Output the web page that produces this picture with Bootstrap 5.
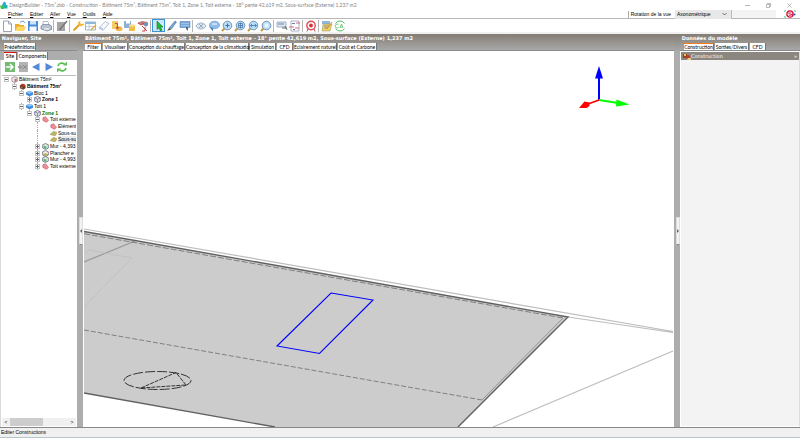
<!DOCTYPE html>
<html lang="fr">
<head>
<meta charset="utf-8">
<meta name="viewport" content="width=device-width, initial-scale=1">
<title>DesignBuilder - 75m².dsb - Construction</title>
<link href="https://cdn.jsdelivr.net/npm/bootstrap@5.3.0/dist/css/bootstrap.min.css" rel="stylesheet">
<style>
body{font:5px/7px "Liberation Sans",Arial,sans-serif;color:#000;background:#fff}
button,select,input,a{font:inherit;color:inherit;text-decoration:none}
button{border:0;background:none;padding:0}
svg{display:block;flex:none}
.ic{width:12px;height:12px}
.titlebar{height:10px;color:#858585;font-family:Lato,"Liberation Sans",sans-serif}
.menubar{height:9px;border-bottom:1px solid #b8b8b8}
.menubar a{font-size:5px}
.menubar a:first-child{margin-left:8px}
.menubar u{text-underline-offset:1px}
.menus{gap:7px}
.view-sel{width:56px;height:9px;background:#e8e8e8;border:0;padding:0 10px 0 2px;appearance:none;line-height:8px}
.rot{border-left:1px solid #aaa;padding-left:2px}
.spare{width:45px;height:8px;background:#f3f3f3;border-left:1px solid #bbb}
.toolbar{height:15px;border-bottom:2px solid #f1f1f1}
.toolbar button{width:13px;height:13px;display:flex;align-items:center;justify-content:center}
.toolbar .picked{background:#cce8ff;outline:1px solid #3c93d8;outline-offset:-1px}
.vr-s{width:1px;height:12px;background:#b5b5b5;margin:0 1px}
.head{height:17px;background:linear-gradient(#857d74,#a8a8a8);border-bottom:1px solid #8a8a8a}
.caption{font:bold 5px/8px "DejaVu Sans",Verdana,sans-serif;color:#fff;height:9px;white-space:nowrap;overflow:hidden}
.tabs{gap:1px;height:7px}
.tabs button{background:#fff;font-family:Lato,"Liberation Sans",sans-serif;line-height:6px;height:7px;padding:0;border-right:1px solid #777;white-space:nowrap;text-align:center}
.tabs .on{border-top:1px solid #f27a1a;line-height:5px}
.tabs .red{border-top-color:#e01010}
.side-l{width:77px}
.side-l .tabs,.side-r .tabs{padding-left:4px}
.side-r{width:120px}
.sub{background:#adadad;height:9px;padding-top:1px}
.sub .tabs{height:8px}
.sub .tabs button{height:8px;line-height:7px}
.splitter{width:6px;background:linear-gradient(#857d74,#a8a8a8) 0 0/100% 17px no-repeat,#adadad}
.splitter button{width:4px;height:28px;background:#f2f2f2;border:1px solid #ddd;border-bottom-color:#888;display:flex;align-items:center}
.treebox{border-left:1px solid #d9d9d9;background:#fff}
.tree-tools{height:16px;gap:1px;border-bottom:1px solid #bcbcbc;margin:0 1px;padding:1px 1px 0 2px}
.tree-tools button{width:12px;height:12px}
.tree{margin:0;padding:0;list-style:none;overflow:hidden;margin-right:1px}
.tree li{display:flex;align-items:center;height:7px;white-space:nowrap;position:relative}
.tree li:nth-child(3n){height:6px}
.tree li>svg{width:7px;height:7px;margin:0 1px 0 2px}
.tree input{appearance:none;width:5px;height:5px;margin:0;border:1px solid #c4c4c4;background:linear-gradient(#666,#666) center/3px 1px no-repeat,#fff;flex:none;z-index:1}
.tree input:not(:checked){background:linear-gradient(#666,#666) center/3px 1px no-repeat,linear-gradient(#666,#666) center/1px 3px no-repeat,#fff}
.tree i{width:5px;flex:none}
.l0{padding-left:3px}.l1{padding-left:11px}.l2{padding-left:18px}.l3{padding-left:26px}.l4{padding-left:34px}.l5{padding-left:42px}
.tree li::before{content:"";position:absolute;top:0;bottom:0;border-left:1px dotted #aaa}
.tree .l1::before{left:13px}.tree .l2::before{left:20px}.tree .l3::before{left:28px}.tree .l4::before,.tree .l5::before{left:36px}.tree .l0::before{display:none}
.green{color:#007800}
.pickrow span{background:#ececec;flex:1}
.hscroll{height:8px;background:#f0f0f0;margin:0 1px 1px}
.hscroll button{width:8px;text-align:center;line-height:7px}
.thumb{width:33px;background:#cdcdcd}
.view{border-left:1px solid #fff}
.view-tabs{padding-left:2px}
.props{background:#f3f3f3;border:1px solid #fff;border-right-color:#ddd}
.group{background:#8b867f;color:#fff;height:8px;line-height:8px;padding:0 2px;font-family:"DejaVu Sans",Verdana,sans-serif}
.status{height:11px;background:#f0f0f0;border-top:1px solid #888;border-bottom:1px solid #b7c3cd;padding:1px 1px 0}
.w17{width:17px}.w25{width:25px}.w56{width:56px}.w63{width:63px}.w26{width:26px}.w16{width:16px}.w43{width:43px}.w39{width:39px}.w30{width:30px}.w32{width:32px}.w34{width:34px}.w13{width:13px}
</style>
<script src="https://cdn.jsdelivr.net/npm/bootstrap@5.3.0/dist/js/bootstrap.bundle.min.js"></script>
</head>
<body class="vh-100 d-flex flex-column overflow-hidden">
<svg class="d-none" aria-hidden="true">
 <symbol id="mag" viewBox="0 0 12 12"><path d="M4 8 1 11" stroke="#c39a4c" stroke-width="2"/><circle cx="6.500" cy="5.500" r="4.300" fill="#b9dcf6" stroke="#7295b8"/></symbol>
 <symbol id="cube" viewBox="0 0 8 8"><path d="M4 .6 7.200 2v3.800L4 7.500.8 5.800V2z" fill="#e9e9f3" stroke="#555577" stroke-width=".8"/><path d="M.8 2 4 3.600 7.200 2M4 3.600v3.800" fill="none" stroke="#555577" stroke-width=".7"/></symbol>
 <symbol id="block" viewBox="0 0 8 8"><path d="M0 2.500 4 .8 8 2.500v2.800L4 7.300 0 5z" fill="#3f8ede"/><path d="M0 2.500 4 .8 8 2.500 4 4.200z" fill="#8fc5f5"/></symbol>
 <symbol id="roof" viewBox="0 0 8 8"><path d="M1 2 4 .8 7.500 5 5 7.200 1 5z" fill="#ee8e96" stroke="#b84452" stroke-width=".6"/></symbol>
 <symbol id="pane" viewBox="0 0 8 8"><path d="M0 5 4 1.500 8 3 6 6.500 3 6z" fill="#bdb765" stroke="#8c8844" stroke-width=".5"/></symbol>
 <symbol id="wall" viewBox="0 0 8 8"><path d="M4 .6 7.200 2v3.800L4 7.500.8 5.800V2z" fill="#dcefdc" stroke="#555577" stroke-width=".8"/><path d="M2 3 5 4v3L2 5.500z" fill="#55b075"/></symbol>
 <symbol id="floor" viewBox="0 0 8 8"><path d="M4 .6 7.200 2v3.800L4 7.500.8 5.800V2z" fill="#efefe0" stroke="#555577" stroke-width=".8"/><path d="M1 5 4 3.700 7 5 4 6.800z" fill="#b7aa45"/></symbol>
 <symbol id="house" viewBox="0 0 8 8"><path d="M1 2.500 4.500.5 7.500 3v3L4.500 7.700 1 6z" fill="#7a3428"/><path d="M2.500 2 6 1l1.500 2L5 4z" fill="#d33225"/><path d="M2 4h2v3L2 6z" fill="#5f8a4a"/></symbol>
 <symbol id="site" viewBox="0 0 8 8"><path d="M1 2 4 .8 7.200 2v4L4 7.500 1 6z" fill="#eee" stroke="#667" stroke-width=".7"/><path d="M4 3h2.500v3L4 7z" fill="#c96a70"/></symbol>
</svg>

<header>
 <div class="titlebar d-flex align-items-center">
  <svg width="8" height="8" viewBox="0 0 8 8"><path d="M2 4 4 .5 6 2v3H2z" fill="#31a8dd"/><path d="M0 4.500h4V8H1z" fill="#43c43a"/><path d="M4 4h3.500v3.500H4z" fill="#1bb5b0"/></svg>
  <span class="text-nowrap me-auto">&nbsp;DesignBuilder - 75m².dsb - Construction - Bâtiment 75m², Bâtiment 75m², Toit 1, Zone 1, Toit externe - 18° pente 42,619 m2, Sous-surface (Externe) 1,237 m2</span>
  <div class="d-flex gap-3 pe-2">
   <button aria-label="Réduire"><svg width="5" height="5" viewBox="0 0 5 5"><path d="M0 2.500h5" stroke="#999" stroke-width=".7"/></svg></button>
   <button aria-label="Agrandir"><svg width="5" height="5" viewBox="0 0 5 5"><path d="M.5 1.500h3v3h-3zM1.500 1V.5h3v3H4" fill="none" stroke="#888" stroke-width=".6"/></svg></button>
   <button aria-label="Fermer"><svg width="5" height="5" viewBox="0 0 5 5"><path d="m.5.5 4 4m0-4-4 4" stroke="#888" stroke-width=".6"/></svg></button>
  </div>
 </div>
 <div class="menubar d-flex align-items-center">
  <nav class="menus d-flex me-auto"><a href="#"><u>F</u>ichier</a><a href="#"><u>E</u>diter</a><a href="#"><u>A</u>ller</a><a href="#"><u>V</u>ue</a><a href="#"><u>O</u>utils</a><a href="#"><u>A</u>ide</a></nav>
  <label class="rot pe-1" for="rot">Rotation de la vue</label>
  <div class="d-flex align-items-center position-relative"><select id="rot" class="view-sel rounded-0"><option>Axonométrique</option></select><svg class="position-absolute end-0 me-1" width="5" height="4" viewBox="0 0 5 4"><path d="m.5 1 2 2 2-2" fill="none" stroke="#444" stroke-width=".7"/></svg></div>
  <div class="spare"></div>
  <svg class="ms-2 me-1" width="12" height="8" viewBox="0 0 12 8"><path d="M0 1.500 2 .5M10 .5l2 1M0 6.500l2 1" stroke="#49c089"/><circle cx="6" cy="4" r="3.800" fill="#d7173e"/><path d="M4 4.500 8 3.500C8 1.500 4 1.500 4 4s3 2.500 4 1.500" fill="none" stroke="#fff" stroke-width=".9"/><circle cx="10.500" cy="4.500" r="1" fill="#2254b8"/></svg>
 </div>
 <div class="toolbar d-flex align-items-center" role="toolbar" aria-label="Outils">
  <button aria-label="Nouveau"><svg class="ic" viewBox="0 0 12 12"><path d="M2.500 1h5l3 3v7.500h-8z" fill="#fff" stroke="#7d8b9b" stroke-width=".8"/><path d="M7.500 1v3h3" fill="none" stroke="#7d8b9b" stroke-width=".7"/></svg></button>
  <button aria-label="Ouvrir"><svg class="ic" viewBox="0 0 12 12"><path d="M1 4h4l1 1h4v6H1z" fill="#e9ad2c"/><path d="M1 11 3 6.500h9L10 11z" fill="#ffd766"/><path d="M6 2.500C8 .5 10 1 11 3" fill="none" stroke="#4b8fd0"/></svg></button>
  <button aria-label="Enregistrer"><svg class="ic" viewBox="0 0 12 12"><path d="M1 1h10v10H1z" fill="#4b8cd8"/><path d="M3 1h6v3.500H3z" fill="#cfe3f7"/><path d="M2.500 6.500h7V11h-7z" fill="#f4f7fb"/></svg></button>
  <button aria-label="Imprimer"><svg class="ic" viewBox="0 0 12 12"><path d="M3 1.500h5l1 4H3z" fill="#fff" stroke="#7d91ad" stroke-width=".6"/><path d="M1 6 3 4.500h6L11.500 6v3.500L7 11 1 9z" fill="#b9c3d1" stroke="#6f7f95" stroke-width=".7"/><path d="M4 9h5" stroke="#fff"/></svg></button>
  <span class="vr-s"></span>
  <button aria-label="Éditer"><svg class="ic" viewBox="0 0 12 12"><path d="M1 2h8v9H1z" fill="#a5a5a5"/><path d="M11 1 5 8l-1.500 2" stroke="#777" stroke-width="1.500" fill="none"/></svg></button>
  <span class="vr-s"></span>
  <button aria-label="Options"><svg class="ic" viewBox="0 0 12 12"><path d="m1.500 10.500 6-6" stroke="#e3a12a" stroke-width="2.200"/><path d="M8.500.5 6 2.500 6.500 5l3 1.500L12 4.500V3.500L9.500 4 8 3z" fill="#f3b63d"/></svg></button>
  <button aria-label="Tableau"><svg class="ic" viewBox="0 0 12 12"><path d="M.5 2h10v8H.5z" fill="#fff" stroke="#86a3bd" stroke-width=".8"/><path d="M.5 2h10v2H.5z" fill="#8fb7da"/><path d="M.5 6.500h10M4 4v6" stroke="#9db3c6" stroke-width=".6"/><path d="m6 10 5-5" stroke="#e6af42" stroke-width="1.500"/></svg></button>
  <button aria-label="Effacer"><svg class="ic" viewBox="0 0 12 12"><path d="m1 8 6-6.500 4 2L5 10.500z" fill="#f5f8fd" stroke="#9fb1cd" stroke-width=".8"/><path d="M1 8 5 10.500V8.500L2.500 6.500z" fill="#b9cce6"/></svg></button>
  <button aria-label="Charger"><svg class="ic" viewBox="0 0 12 12"><path d="M1 1h6v8H1z" fill="#f3cc66"/><ellipse cx="8" cy="8.800" rx="3.500" ry="2.500" fill="#edbb4c"/><path d="M4 3.500h2.500v5M5 7l1.500 2L8 7" fill="none" stroke="#d8463a"/></svg></button>
  <button aria-label="Stocker"><svg class="ic" viewBox="0 0 12 12"><path d="M0 1h7v7H0z" fill="#8eb0d8"/><path d="M2 1h4v2.500H2z" fill="#fff"/><path d="M5 5h6v6H5z" fill="#f0bd45"/><ellipse cx="8" cy="5.500" rx="3" ry="1.300" fill="#fbdf8b"/></svg></button>
  <button aria-label="Importer"><svg class="ic" viewBox="0 0 12 12"><path d="M0 3 5 1l6 1-1 4-4-1z" fill="#b98086"/><path d="M1 3 4 5l3-2M5 6l5 5M8 7v4H5" stroke="#cf4240" fill="none"/><circle cx="9" cy="4.500" r="2" fill="#6c93ba"/></svg></button>
  <span class="vr-s"></span>
  <button class="picked" aria-label="Sélection"><svg class="ic" viewBox="0 0 12 12"><path d="M4 1v8.500l2-1.800 1.500 3.500 1.500-.7L7.500 7H10z" fill="#20bb2f" stroke="#147520" stroke-width=".6"/></svg></button>
  <button aria-label="Dessiner"><svg class="ic" viewBox="0 0 12 12"><path d="m3 8 6-7 1.500 1L5 9.500z" fill="#76a9dc" stroke="#526b8c" stroke-width=".6"/><path d="M1 11 3 8l2 1.500z" fill="#555"/></svg></button>
  <button aria-label="Placer"><svg class="ic" viewBox="0 0 12 12"><path d="M1 1.500h10v6H1z" fill="#78a9dc" stroke="#5683b5" stroke-width=".6"/><path d="M2 3.500h8M2 5.500h8" stroke="#b7d2ee" stroke-width=".6"/><path d="M7 7h2v4L7 9z" fill="#466f9d"/></svg></button>
  <span class="vr-s"></span>
  <button aria-label="Orbite"><svg class="ic" viewBox="0 0 12 12"><path d="M1 6c2-4 8-4 10 0-2 4-8 4-10 0z" fill="#dbe7f2" stroke="#8aa2bb" stroke-width=".8"/><path d="m4 4 4 4m0-4L4 8" stroke="#8798ad" stroke-width=".8"/></svg></button>
  <button aria-label="Rotation"><svg class="ic" viewBox="0 0 12 12"><ellipse cx="6.500" cy="5" rx="5" ry="3.800" fill="#8fbdea" stroke="#5f8fc2" stroke-width=".6"/><path d="M1 6.500 5 8v3.500L3 9z" fill="#4f7fb5"/><path d="M4 4h5" stroke="#d8ebfb" stroke-width="1.500"/></svg></button>
  <button aria-label="Zoom avant"><svg class="ic" viewBox="0 0 12 12"><use href="#mag"/><path d="M4.500 5.500h4m-2-2v4" stroke="#3774b4"/></svg></button>
  <button aria-label="Zoom étendu"><svg class="ic" viewBox="0 0 12 12"><use href="#mag"/><path d="M4.500 3.500h4v4h-4zM4 5.500h5m-2.500-3v6" fill="none" stroke="#416f9f" stroke-width=".7"/></svg></button>
  <button aria-label="Zoom largeur"><svg class="ic" viewBox="0 0 12 12"><use href="#mag"/><path d="M3.500 5.500h6M5 4 3.500 5.500 5 7M8 4l1.500 1.500L8 7" fill="none" stroke="#3774b4" stroke-width=".8"/></svg></button>
  <button aria-label="Zoom fenêtre"><svg class="ic" viewBox="0 0 12 12"><use href="#mag"/><path d="M4.500 3.500h4v4h-4z" fill="#e8f5ff"/></svg></button>
  <span class="vr-s"></span>
  <button aria-label="Légende"><svg class="ic" viewBox="0 0 12 12"><path d="M1 2h9v5H1z" fill="#dfe7f1" stroke="#8396b2" stroke-width=".7"/><path d="M2 4h6" stroke="#6881a5"/><path d="M6 8h5m-2-2 2 4" stroke="#455" stroke-width=".8"/></svg></button>
  <button aria-label="Calendrier"><svg class="ic" viewBox="0 0 12 12"><path d="M2 1h8v10H2z" fill="#fff" stroke="#8990a5" stroke-width=".7"/><path d="M0 7h5M7 3h4M6 8h4" stroke="#d36d7a" stroke-width="1.200"/><path d="M3 3.500h3M4 9.500h2" stroke="#6982b3"/></svg></button>
  <span class="vr-s"></span>
  <button aria-label="Cible"><svg class="ic" viewBox="0 0 12 12"><circle cx="6" cy="5.500" r="4.200" fill="#fff" stroke="#df4e55" stroke-width="1.400"/><circle cx="6" cy="5.500" r="1.900" fill="#d7333d"/><path d="m3 9-1 2.500M9 9l1 2.500" stroke="#c64c50"/></svg></button>
  <span class="vr-s"></span>
  <button aria-label="Notes"><svg class="ic" viewBox="0 0 12 12"><path d="M1 1h8v3H1z" fill="#91b7df"/><path d="M2 4h9l-2 7H1z" fill="#f4cf63" stroke="#92a270" stroke-width=".6"/><path d="M3 6h5M3 8h4" stroke="#5e7d9b" stroke-width=".7"/><path d="m6 9 5-7" stroke="#d58d2d"/></svg></button>
  <button aria-label="Carbone"><svg class="ic" viewBox="0 0 12 12"><path d="M1.500 3.500a5 4.500 0 0 1 9 0M10.500 8.500a5 4.500 0 0 1-9 0" fill="none" stroke="#58bd64"/><path d="M4.500 4.500a2 2 0 1 0 0 3M6 8l1.500-4L9 8M6.500 7h2" fill="none" stroke="#58bd64" stroke-width=".8"/></svg></button>
 </div>
</header>

<main class="d-flex flex-fill overflow-hidden">
 <aside class="side-l d-flex flex-column flex-shrink-0">
  <div class="head"><div class="caption">&nbsp;Naviguer, Site</div><div class="tabs d-flex"><button class="w32">Prédéfinitions</button></div></div>
  <div class="sub"><div class="tabs d-flex"><button class="w13 on red">Site</button><button class="w30">Components</button></div></div>
  <div class="treebox flex-fill d-flex flex-column">
   <div class="tree-tools d-flex">
    <button aria-label="Aller"><svg class="ic" viewBox="0 0 12 12"><path d="M1 1h10v10H1z" fill="#72bd72"/><path d="M2 6h6M6 3l3 3-3 3" fill="none" stroke="#fff" stroke-width="1.500"/></svg></button>
    <button aria-label="Supprimer"><svg class="ic" viewBox="0 0 12 12"><path d="M2 1h9v10H2z" fill="#b3b3b3"/><path d="M1 6h5M3.500 4l-2 2 2 2M6 4l4 4m0-4L6 8" fill="none" stroke="#888" stroke-width=".9"/></svg></button>
    <button aria-label="Précédent"><svg class="ic" viewBox="0 0 12 12"><path d="M9.500 2v8L2 6z" fill="#5589d8"/></svg></button>
    <button aria-label="Suivant"><svg class="ic" viewBox="0 0 12 12"><path d="M2.500 2v8l7.500-4z" fill="#5589d8"/></svg></button>
    <button aria-label="Actualiser"><svg class="ic" viewBox="0 0 12 12"><path d="M2 5C2.500 2 6 1.500 8.500 3M10 7c-.5 3-4 3.500-6.500 2" fill="none" stroke="#5abd4f" stroke-width="1.600"/><path d="M7 4.500h4v-4zM5 7.500H1v4z" fill="#5abd4f"/></svg></button>
   </div>
   <ul class="tree flex-fill">
    <li class="l0"><input id="t0" type="checkbox" checked><svg><use href="#site"/></svg><label for="t0">Bâtiment 75m²</label></li>
    <li class="l1"><input id="t1" type="checkbox" checked><svg><use href="#house"/></svg><label for="t1" class="fw-bold">Bâtiment 75m²</label></li>
    <li class="l2"><input id="t2" type="checkbox" checked><svg><use href="#block"/></svg><label for="t2">Bloc 1</label></li>
    <li class="l3"><input id="t3" type="checkbox"><svg><use href="#cube"/></svg><label for="t3" class="fw-bold">Zone 1</label></li>
    <li class="l2"><input id="t4" type="checkbox" checked><svg><use href="#block"/></svg><label for="t4">Toit 1</label></li>
    <li class="l3"><input id="t5" type="checkbox" checked><svg><use href="#cube"/></svg><label for="t5" class="fw-bold green">Zone 1</label></li>
    <li class="l4"><input id="t6" type="checkbox" checked><svg><use href="#roof"/></svg><label for="t6">Toit externe</label></li>
    <li class="l5"><i></i><svg><use href="#roof"/></svg><span>Elément</span></li>
    <li class="l5"><i></i><svg><use href="#pane"/></svg><span>Sous-su</span></li>
    <li class="l5 pickrow"><i></i><svg><use href="#pane"/></svg><span>Sous-su</span></li>
    <li class="l4"><input id="t7" type="checkbox"><svg><use href="#wall"/></svg><label for="t7">Mur - 4,393</label></li>
    <li class="l4"><input id="t8" type="checkbox"><svg><use href="#floor"/></svg><label for="t8">Plancher e</label></li>
    <li class="l4"><input id="t9" type="checkbox"><svg><use href="#wall"/></svg><label for="t9">Mur - 4,993</label></li>
    <li class="l4"><input id="t10" type="checkbox"><svg><use href="#roof"/></svg><label for="t10">Toit externe</label></li>
   </ul>
   <div class="hscroll d-flex"><button aria-label="Gauche">&lt;</button><div class="thumb"></div><button class="ms-auto" aria-label="Droite">&gt;</button></div>
  </div>
 </aside>
 <div class="splitter d-flex align-items-center flex-shrink-0"><button class="ms-auto" aria-label="Replier le navigateur"><svg width="2" height="4" viewBox="0 0 2 4"><path d="M2 0v4L0 2z" fill="#666"/></svg></button></div>
 <section class="flex-fill d-flex flex-column overflow-hidden">
  <div class="head"><div class="caption view-tabs"><span>Bâtiment 75m², Bâtiment 75m², Toit 1, Zone 1, Toit externe - 18° pente 42,619 m2, Sous-surface (Externe) 1,237 m2</span></div>
   <div class="tabs view-tabs d-flex"><button class="w17 on">Filter</button><button class="w25">Visualiser</button><button class="w56">Conception du chauffage</button><button class="w63">Conception de la climatisation</button><button class="w26">Simulation</button><button class="w16">CFD</button><button class="w43">Eclairement naturel</button><button class="w39">Coût et Carbone</button></div></div>
  <div class="view flex-fill overflow-hidden">
   <svg class="w-100 h-100" viewBox="84 51 590 376" preserveAspectRatio="xMinYMin slice" fill="none" role="img" aria-label="Vue axonométrique du toit">
    <path d="M84 231.500 568 317 458 427H275L84 393z" fill="#ccc"/>
    <path d="M84 229 673 331.500M568 317l105 15.500M673 351 493 427" stroke="#bdbdbd" stroke-width="1.200"/>
    <path d="M84 262 135 241" stroke="#999" stroke-width="1.200"/>
    <path d="m84 254 5-4 43 8-48 49" stroke="#bfbfbf" stroke-width=".8"/>
    <path d="M84 233.700 563 318" stroke="#777" stroke-width=".9" stroke-dasharray="6 2"/>
    <path d="M563 318 482 400" stroke="#888" stroke-width=".8"/>
    <path d="M84 330 482 400" stroke="#777" stroke-width=".9" stroke-dasharray="5 2"/>
    <path d="M84 231.500 568 317 458 427M84 393l191 34" stroke="#606060" stroke-width="1.400"/>
    <path d="m331 293 42 7-53.500 53.500L277 346z" stroke="#00f" stroke-width="1.100"/>
    <ellipse cx="157.500" cy="380.500" rx="33.500" ry="9" stroke="#222" stroke-width=".9" stroke-dasharray="10 2"/>
    <path d="m141 388 35-15.500L186 385z" stroke="#222" stroke-width=".9" stroke-dasharray="4 1"/>
    <path d="M599 100V77" stroke="#00f" stroke-width="2"/><path d="m599 66 4 12.500h-8z" fill="#00f"/>
    <path d="m599 100 19 3" stroke="#0f0" stroke-width="1.800"/><path d="m616.500 99.500 13 5-13.500 2z" fill="#0f0"/>
    <path d="m599 100-11 4" stroke="red" stroke-width="1.800"/><path d="m579 108 5.500-6.500 5 1v3.500l-3 2z" fill="red"/>
   </svg>
  </div>
 </section>
 <div class="splitter d-flex align-items-center flex-shrink-0"><button class="ms-auto" aria-label="Replier les données"><svg width="2" height="4" viewBox="0 0 2 4"><path d="M0 0v4l2-2z" fill="#666"/></svg></button></div>
 <aside class="side-r d-flex flex-column flex-shrink-0">
  <div class="head"><div class="caption">&nbsp;Données du modèle</div><div class="tabs d-flex"><button class="w30 on">Construction</button><button class="w34">Sorties/Divers</button><button class="w16">CFD</button></div></div>
  <div class="props flex-fill"><div class="group d-flex align-items-center"><svg width="8" height="7" viewBox="0 0 8 7"><path d="M0 1h4v4H0z" fill="#8a4b16"/><path d="M1 1h2v2H1z" fill="#efc04d"/><circle cx="5" cy="4" r="2" fill="#c63427"/><path d="M5 5h3v2H4z" fill="#edcc80"/></svg><span>Construction</span><button class="ms-auto" aria-label="Replier">»</button></div></div>
 </aside>
</main>
<footer class="status">Editer Constructions</footer>
</body>
</html>
